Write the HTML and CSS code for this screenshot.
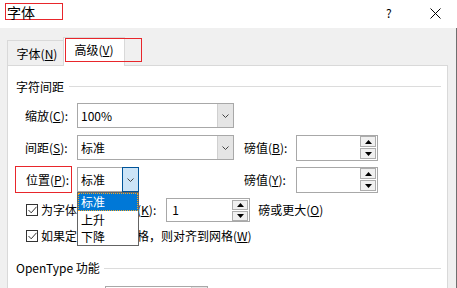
FILE: index.html
```html
<!DOCTYPE html>
<html lang="zh-CN">
<head>
    <meta charset="UTF-8">
    <title>字体</title>

    <link rel="stylesheet" href="styles.css">
</head>
<body>
    <div class="dialog">
        <div class="titlebar">
            <span class="title">字体</span>
            <span class="help">?</span>
            <span class="close">
                <svg width="11" height="11" viewBox="0 0 11 11"><path d="M0.5 0.5L10.5 10.5M10.5 0.5L0.5 10.5" stroke="#000" stroke-width="1" fill="none"/></svg>
            </span>
        </div>

        <div class="body">
            <div class="tabs">
                <div class="tab">字体(<u>N</u>)</div>
                <div class="tab tab-active">高级(<u>V</u>)</div>
            </div>

            <div class="panel">
                <div class="group-title">字符间距</div>

                <!-- 缩放 -->
                <div class="row row-1">
                    <span class="label">缩放(<u>C</u>):</span>
                    <div class="combo combo-wide">
                        <span class="combo-text">100%</span>
                        <span class="combo-btn"><svg width="7" height="4" viewBox="0 0 7 4"><polyline points="0.5,0.5 3.5,3.5 6.5,0.5" fill="none" stroke="#444" stroke-width="1"/></svg></span>
                    </div>
                </div>

                <!-- 间距 -->
                <div class="row row-2">
                    <span class="label">间距(<u>S</u>):</span>
                    <div class="combo combo-wide">
                        <span class="combo-text">标准</span>
                        <span class="combo-btn"><svg width="7" height="4" viewBox="0 0 7 4"><polyline points="0.5,0.5 3.5,3.5 6.5,0.5" fill="none" stroke="#444" stroke-width="1"/></svg></span>
                    </div>
                    <span class="label label-pt">磅值(<u>B</u>):</span>
                    <div class="spin">
                        <span class="spin-text"></span>
                        <span class="spin-btns">
                            <span class="spin-btn"><svg width="7" height="4" viewBox="0 0 7 4"><polygon points="0,4 7,4 3.5,0" fill="#000"/></svg></span>
                            <span class="spin-btn"><svg width="7" height="4" viewBox="0 0 7 4"><polygon points="0,0 7,0 3.5,4" fill="#000"/></svg></span>
                        </span>
                    </div>
                </div>

                <!-- 位置 -->
                <div class="row row-3">
                    <span class="label label-mark">位置(<u>P</u>):</span>
                    <div class="combo combo-small combo-open">
                        <span class="combo-text">标准</span>
                        <span class="combo-btn"><svg width="7" height="4" viewBox="0 0 7 4"><polyline points="0.5,0.5 3.5,3.5 6.5,0.5" fill="none" stroke="#444" stroke-width="1"/></svg></span>
                        <ul class="dropdown">
                            <li class="selected">标准</li>
                            <li>上升</li>
                            <li>下降</li>
                        </ul>
                    </div>
                    <span class="label label-pt label-y">磅值(<u>Y</u>):</span>
                    <div class="spin">
                        <span class="spin-text"></span>
                        <span class="spin-btns">
                            <span class="spin-btn"><svg width="7" height="4" viewBox="0 0 7 4"><polygon points="0,4 7,4 3.5,0" fill="#000"/></svg></span>
                            <span class="spin-btn"><svg width="7" height="4" viewBox="0 0 7 4"><polygon points="0,0 7,0 3.5,4" fill="#000"/></svg></span>
                        </span>
                    </div>
                </div>

                <!-- 字距调整 -->
                <div class="row row-4">
                    <span class="check"><svg width="9" height="8" viewBox="0 0 9 8"><polyline points="0.5,4 3.2,6.8 8.5,0.8" fill="none" stroke="#333" stroke-width="1"/></svg></span>
                    <span class="check-text">为字体调整字间距(<u>K</u>):</span>
                    <div class="spin spin-k">
                        <span class="spin-text">1</span>
                        <span class="spin-btns">
                            <span class="spin-btn"><svg width="7" height="4" viewBox="0 0 7 4"><polygon points="0,4 7,4 3.5,0" fill="#000"/></svg></span>
                            <span class="spin-btn"><svg width="7" height="4" viewBox="0 0 7 4"><polygon points="0,0 7,0 3.5,4" fill="#000"/></svg></span>
                        </span>
                    </div>
                    <span class="after-text">磅或更大(<u>O</u>)</span>
                </div>

                <!-- 网格 -->
                <div class="row row-5">
                    <span class="check"><svg width="9" height="8" viewBox="0 0 9 8"><polyline points="0.5,4 3.2,6.8 8.5,0.8" fill="none" stroke="#333" stroke-width="1"/></svg></span>
                    <span class="check-text">如果定义了文档网格，则对齐到网格(<u>W</u>)</span>
                </div>

                <div class="group-title group-title-2">OpenType 功能</div>

                <div class="row row-6">
                    <div class="combo combo-liga">
                        <span class="combo-text"></span>
                        <span class="combo-btn"></span>
                    </div>
                </div>
            </div>
        </div>
    </div>
</body>
</html>
```

FILE: styles.css
```css
* {
    margin: 0;
    padding: 0;
    box-sizing: border-box;
}

body {
    font-family: "Noto Sans CJK SC", "Microsoft YaHei", sans-serif;
    font-size: 12px;
    line-height: 16px;
    color: #000000;
    background: #ffffff;
}

u {
    text-decoration: underline;
    text-underline-offset: 1px;
}

.dialog {
    width: 457px;
    height: 288px;
    overflow: hidden;
    display: flex;
    flex-direction: column;
}

/* 标题栏 */
.titlebar {
    height: 28px;
    flex: none;
    display: flex;
    align-items: flex-start;
    background: #ffffff;
}

.title {
    width: 58px;
    height: 17px;
    margin: 3px 0 0 5px;
    padding-left: 1px;
    font-size: 14px;
    line-height: 17px;
    border: 1px solid #e8262b;
}

.help {
    margin: 5px 0 0 323px;
    font-size: 12px;
}

.close {
    display: flex;
    margin: 8px 0 0 38px;
}

/* 主体 */
.body {
    flex: 1;
    background: #f0f0f0;
    border-right: 1px solid #6f6f6f;
}

.tabs {
    height: 37px;
    display: flex;
    align-items: flex-end;
    margin-left: 7px;
}

.tab {
    width: 56px;
    height: 25px;
    display: flex;
    align-items: center;
    justify-content: center;
    padding: 1px 0 0 3px;
    border: 1px solid #d9d9d9;
    border-bottom: none;
    border-right: none;
}

.tab-active {
    position: relative;
    width: 62px;
    height: 29px;
    margin-bottom: -1px;
    padding: 0 0 4px 0;
    background: #ffffff;
    border-right: 1px solid #d9d9d9;
    z-index: 1;
}

.tab-active::after {
    content: "";
    position: absolute;
    left: 1px;
    top: 0;
    width: 75px;
    height: 22px;
    border: 1px solid #e8262b;
}

.panel {
    width: 441px;
    height: 240px;
    margin-left: 7px;
    padding: 13px 0 0 8px;
    background: #ffffff;
    border: 1px solid #d9d9d9;
}

.group-title {
    display: flex;
    align-items: center;
    height: 16px;
    padding-right: 6px;
}

.group-title::after {
    content: "";
    flex: 1;
    height: 1px;
    margin-left: 5px;
    margin-top: -2px;
    background: #dcdcdc;
}

.group-title-2 {
    margin-top: 16px;
}

.group-title-2::after {
    margin-left: 4px;
    margin-top: 0;
}

.row {
    display: flex;
    align-items: center;
    padding-left: 9px;
}

.row-1 {
    height: 25px;
    margin-top: 8px;
}

.row-2 {
    height: 27px;
    margin-top: 6px;
}

.row-3 {
    height: 27px;
    margin-top: 5px;
}

.row-4 {
    height: 24px;
    margin-top: 5px;
}

.row-5 {
    height: 16px;
    margin-top: 6px;
}

.row-6 {
    height: 25px;
    margin-top: 10px;
    padding-left: 89px;
    align-items: flex-start;
}

.label {
    width: 52px;
    flex: none;
}

.label-pt {
    margin-left: 10px;
}

.label-y {
    margin-left: 105px;
}

.label-mark {
    width: 57px;
    height: 27px;
    margin-left: -10px;
    margin-right: 5px;
    padding-left: 10px;
    line-height: 25px;
    border: 1px solid #e8262b;
}

/* 下拉框 */
.combo {
    position: relative;
    height: 25px;
    display: flex;
    border: 1px solid #a8a8a8;
    background: #ffffff;
}

.combo-wide {
    width: 157px;
}

.combo-small {
    width: 62px;
}

.combo-liga {
    width: 103px;
    border-bottom: none;
}

.combo-text {
    flex: 1;
    padding-left: 3px;
    line-height: 23px;
}

.combo-btn {
    width: 16px;
    display: flex;
    align-items: center;
    justify-content: center;
    background: #e5e5e5;
    border-left: 1px solid #d0d0d0;
}

.combo-open .combo-btn {
    background: #cce4f7;
    border: 1px solid #005499;
    margin: -1px -1px -1px 0;
    width: 17px;
}

.dropdown {
    position: absolute;
    left: -1px;
    top: 24px;
    width: 62px;
    height: 54px;
    list-style: none;
    background: #ffffff;
    border: 1px solid #646464;
    z-index: 2;
}

.dropdown li {
    height: 17px;
    line-height: 17px;
    padding-left: 3px;
}

.dropdown li.selected {
    height: 18px;
    line-height: 16px;
    padding-left: 2px;
    color: #ffffff;
    background: #0078d7;
    border: 1px dotted #f5a623;
}

/* 数值框 */
.spin {
    width: 82px;
    height: 26px;
    display: flex;
    border: 1px solid #a8a8a8;
    background: #ffffff;
}

.spin-k {
    width: 84px;
    height: 24px;
    margin-left: 10px;
}

.spin-text {
    flex: 1;
    padding-left: 5px;
    line-height: 22px;
}

.spin-btns {
    width: 16px;
    display: flex;
    flex-direction: column;
    justify-content: center;
    gap: 1px;
    margin-right: 1px;
}

.spin-btn {
    height: 11px;
    display: flex;
    align-items: center;
    justify-content: center;
    background: #f0f0f0;
    border: 1px solid #adadad;
}

.spin-k .spin-btn {
    height: 10px;
}

/* 复选框 */
.check {
    width: 12px;
    height: 12px;
    margin-left: 1px;
    display: flex;
    align-items: center;
    justify-content: center;
    border: 1px solid #333333;
    background: #ffffff;
}

.check-text {
    margin-left: 3px;
}

.after-text {
    margin-left: 8px;
}
```
